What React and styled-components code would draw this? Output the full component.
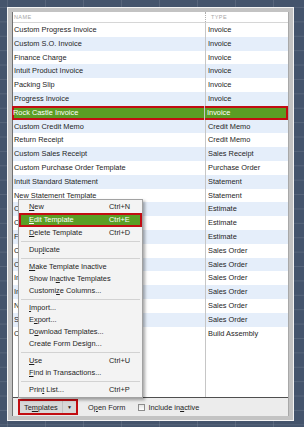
import React from "react";
import styled, { createGlobalStyle } from "styled-components";

const Global = createGlobalStyle`
  html, body {
    margin: 0;
    padding: 0;
  }
  body {
    width: 304px;
    height: 427px;
    overflow: hidden;
    background-color: #44546c;
    background-image:
      linear-gradient(to right, rgba(255, 255, 255, 0.1) 1px, transparent 1px),
      linear-gradient(to bottom, rgba(255, 255, 255, 0.1) 1px, transparent 1px);
    background-size: 38px 14.4px;
    background-position: 7px 7px;
    font-family: "Liberation Sans", Arial, sans-serif;
  }
`;

const Frame = styled.div`
  margin: 7px 0 0 7px;
  width: 287px;
  height: 414px;
  box-sizing: border-box;
  border: 1px solid #f4f4f4;
  padding: 4px;
  background: #c3c3c3;
  display: flex;
`;

const Panel = styled.div`
  position: relative;
  flex: 1;
  display: flex;
  flex-direction: column;
  background: #fff;
  border-left: 1px solid #707070;
  border-right: 1px solid #a8a8a8;
`;

const Header = styled.div`
  display: grid;
  grid-template-columns: 192px 1fr;
  height: 11px;
  box-sizing: border-box;
  border-bottom: 1px solid #d6d6d6;
`;

const HeaderCell = styled.div`
  font-size: 5.5px;
  line-height: 10px;
  letter-spacing: 0.4px;
  color: #a6a6a6;
  padding-left: ${(p) => (p.$divider ? "5px" : "1px")};
  border-left: ${(p) => (p.$divider ? "1px dotted #b0b0b0" : "none")};
`;

const Row = styled.div`
  display: grid;
  grid-template-columns: 192px 1fr;
  height: 13.8px;
  color: ${(p) => (p.$selected ? "#fff" : "#1e1e1e")};
  background: ${(p) =>
    p.$selected ? "#5a9e24" : p.$alt ? "#e5eefa" : "#fff"};
  box-shadow: ${(p) => (p.$selected ? "inset 0 0 0 2px #c20d12" : "none")};
  margin-left: ${(p) => (p.$selected ? "-1px" : "0")};
`;

const Cell = styled.div`
  font-size: 7.4px;
  line-height: 13.8px;
  padding-left: ${(p) => (p.$type ? "2px" : "1px")};
  white-space: nowrap;
  overflow: hidden;
  border-left: ${(p) => (p.$type ? "1px solid #c6c6c6" : "none")};
`;

const Filler = styled.div`
  flex: 1;
  display: grid;
  grid-template-columns: 192px 1fr;
`;

const FillerCol = styled.div`
  border-left: ${(p) => (p.$type ? "1px solid #c6c6c6" : "none")};
`;

const Bar = styled.div`
  height: 19px;
  box-sizing: border-box;
  border-top: 1px solid #4f4f4f;
  background: #ececec;
  display: flex;
  align-items: center;
  padding-left: 5px;
  font-size: 7.4px;
  color: #1e1e1e;
`;

const TemplatesButton = styled.div`
  width: 60px;
  height: 16px;
  box-sizing: border-box;
  border: 2px solid #c20d12;
  background: #d8d8d8;
  display: flex;
  align-items: center;
  padding-left: 4px;
`;

const ButtonLabel = styled.span`
  flex: 1;
`;

const Arrow = styled.span`
  width: 13px;
  height: 100%;
  display: flex;
  align-items: center;
  justify-content: center;
  border-left: 1px solid #c2c2c2;
  font-size: 5px;
`;

const FlatButton = styled.div`
  margin-left: 8px;
  padding: 0 2px;
`;

const Check = styled.div`
  margin-left: 11px;
  width: 7px;
  height: 7px;
  box-sizing: border-box;
  border: 1px solid #8c8c8c;
  background: linear-gradient(#e4e4e4, #fff);
`;

const CheckLabel = styled.span`
  margin-left: 3px;
`;

const Menu = styled.div`
  position: absolute;
  left: 5px;
  top: 187px;
  width: 125px;
  box-sizing: border-box;
  border: 1px solid #a2a2a2;
  background: #f3f3f3;
  box-shadow: 2px 2px 3px rgba(0, 0, 0, 0.35);
  padding: 1px 0;
  font-size: 7.4px;
  color: #1e1e1e;
`;

const MenuItem = styled.div`
  display: grid;
  grid-template-columns: 80px 1fr;
  height: ${(p) => (p.$active ? "14px" : "12px")};
  line-height: ${(p) => (p.$active ? "14px" : "12px")};
  padding-left: 10px;
  white-space: nowrap;
  color: ${(p) => (p.$active ? "#fff" : "#1e1e1e")};
  background: ${(p) => (p.$active ? "#5a9e24" : "transparent")};
  box-shadow: ${(p) => (p.$active ? "inset 0 0 0 2px #c20d12" : "none")};
`;

const Separator = styled.div`
  margin: 2px 2px;
  border-top: 1px solid #d2d2d2;
`;

const rows = [
  ["Custom Progress Invoice", "Invoice"],
  ["Custom S.O. Invoice", "Invoice"],
  ["Finance Charge", "Invoice"],
  ["Intuit Product Invoice", "Invoice"],
  ["Packing Slip", "Invoice"],
  ["Progress Invoice", "Invoice"],
  ["Rock Castle Invoice", "Invoice"],
  ["Custom Credit Memo", "Credit Memo"],
  ["Return Receipt", "Credit Memo"],
  ["Custom Sales Receipt", "Sales Receipt"],
  ["Custom Purchase Order Template", "Purchase Order"],
  ["Intuit Standard Statement", "Statement"],
  ["New Statement Template", "Statement"],
  ["Custom Estimate", "Estimate"],
  ["Custom Job Estimate", "Estimate"],
  ["Fixed Fee Estimate", "Estimate"],
  ["Custom Sales Order", "Sales Order"],
  ["Custom Sales Order 2", "Sales Order"],
  ["Intuit Sales Order", "Sales Order"],
  ["Intuit Pick List", "Sales Order"],
  ["New Sales Order Template", "Sales Order"],
  ["Sales Order with Rep", "Sales Order"],
  ["Custom Build Assembly", "Build Assembly"],
];

const menu = [
  { label: <><u>N</u>ew</>, key: "Ctrl+N" },
  { label: <><u>E</u>dit Template</>, key: "Ctrl+E", active: true },
  { label: <><u>D</u>elete Template</>, key: "Ctrl+D" },
  "sep",
  { label: <>Dup<u>l</u>icate</> },
  "sep",
  { label: <><u>M</u>ake Template Inactive</> },
  { label: <>Show In<u>a</u>ctive Templates</> },
  { label: <>Customi<u>z</u>e Columns...</> },
  "sep",
  { label: <><u>I</u>mport...</> },
  { label: <>E<u>x</u>port...</> },
  { label: <>D<u>o</u>wnload Templates...</> },
  { label: <>Create Form Design...</> },
  "sep",
  { label: <><u>U</u>se</>, key: "Ctrl+U" },
  { label: <><u>F</u>ind in Transactions...</> },
  "sep",
  { label: <>Prin<u>t</u> List...</>, key: "Ctrl+P" },
];

const App = () => {
  return (
    <>
      <Global />
      <Frame>
        <Panel>
          <Header>
            <HeaderCell>NAME</HeaderCell>
            <HeaderCell $divider>TYPE</HeaderCell>
          </Header>
          {rows.map(([name, type], i) => (
            <Row key={name} $alt={i % 2 === 1} $selected={i === 6}>
              <Cell>{name}</Cell>
              <Cell $type>{type}</Cell>
            </Row>
          ))}
          <Filler>
            <FillerCol />
            <FillerCol $type />
          </Filler>
          <Bar>
            <TemplatesButton>
              <ButtonLabel>
                Te<u>m</u>plates
              </ButtonLabel>
              <Arrow>▼</Arrow>
            </TemplatesButton>
            <FlatButton>
              O<u>p</u>en Form
            </FlatButton>
            <Check />
            <CheckLabel>
              Include in<u>a</u>ctive
            </CheckLabel>
          </Bar>
          <Menu>
            {menu.map((m, i) =>
              m === "sep" ? (
                <Separator key={i} />
              ) : (
                <MenuItem key={i} $active={m.active}>
                  <span>{m.label}</span>
                  <span>{m.key}</span>
                </MenuItem>
              )
            )}
          </Menu>
        </Panel>
      </Frame>
    </>
  );
};

export default App;
